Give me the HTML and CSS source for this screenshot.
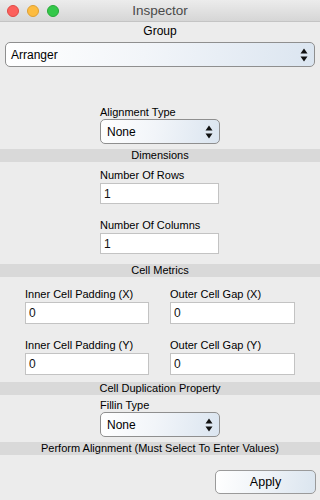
FILE: index.html
```html
<!DOCTYPE html>
<html lang="en">
<head>
    <meta charset="UTF-8">
    <meta name="viewport" content="width=device-width, initial-scale=1.0">
    <title>Inspector</title>
    <link rel="stylesheet" href="styles.css">
</head>
<body>
    <div class="titlebar">
        <div class="lights">
            <span class="light red"></span>
            <span class="light yellow"></span>
            <span class="light green"></span>
        </div>
        <div class="title">Inspector</div>
        <div></div>
    </div>

    <div class="heading group-heading">Group</div>
    <div class="popup popup-wide">
        <span>Arranger</span>
        <svg width="8" height="14" viewBox="0 0 8 14"><path d="M4 0.5 L7.5 5.5 L0.5 5.5 Z M4 13.5 L7.5 8.5 L0.5 8.5 Z" fill="#111"/></svg>
    </div>

    <div class="field align-field">
        <label class="label">Alignment Type</label>
        <div class="popup">
            <span>None</span>
            <svg width="8" height="14" viewBox="0 0 8 14"><path d="M4 0.5 L7.5 5.5 L0.5 5.5 Z M4 13.5 L7.5 8.5 L0.5 8.5 Z" fill="#111"/></svg>
        </div>
    </div>

    <div class="bar bar-dimensions">Dimensions</div>

    <div class="field rows-field">
        <label class="label">Number Of Rows</label>
        <input type="text" class="box" value="1">
    </div>
    <div class="field cols-field">
        <label class="label">Number Of Columns</label>
        <input type="text" class="box" value="1">
    </div>

    <div class="bar bar-metrics">Cell Metrics</div>

    <div class="metrics">
        <div class="cell">
            <label class="label">Inner Cell Padding (X)</label>
            <input type="text" class="box tall" value="0">
        </div>
        <div class="cell">
            <label class="label">Outer Cell Gap (X)</label>
            <input type="text" class="box tall" value="0">
        </div>
        <div class="cell second">
            <label class="label">Inner Cell Padding (Y)</label>
            <input type="text" class="box tall" value="0">
        </div>
        <div class="cell second">
            <label class="label">Outer Cell Gap (Y)</label>
            <input type="text" class="box tall" value="0">
        </div>
    </div>

    <div class="bar bar-dup">Cell Duplication Property</div>

    <div class="field fill-field">
        <label class="label">Fillin Type</label>
        <div class="popup">
            <span>None</span>
            <svg width="8" height="14" viewBox="0 0 8 14"><path d="M4 0.5 L7.5 5.5 L0.5 5.5 Z M4 13.5 L7.5 8.5 L0.5 8.5 Z" fill="#111"/></svg>
        </div>
    </div>

    <div class="bar bar-perform">Perform Alignment (Must Select To Enter Values)</div>

    <div class="actions">
        <button class="apply">Apply</button>
    </div>
</body>
</html>
```

FILE: styles.css
```css
body {
    margin: 0;
    width: 320px;
    height: 500px;
    overflow: hidden;
    background: #ececec;
    font-family: "Liberation Sans", Arial, sans-serif;
    font-size: 11px;
    color: #000;
}
.titlebar {
    display: grid;
    grid-template-columns: 1fr auto 1fr;
    align-items: center;
    height: 21px;
    border-bottom: 1px solid #c4c4c4;
    background: linear-gradient(#ececec, #d6d6d6);
}
.lights {
    display: flex;
    gap: 8px;
    padding-left: 7px;
}
.light {
    width: 12px;
    height: 12px;
    border-radius: 50%;
    box-sizing: border-box;
}
.red {
    background: #fc605c;
    border: 1px solid #df4a45;
}
.yellow {
    background: #fdbc40;
    border: 1px solid #dea033;
}
.green {
    background: #34c84a;
    border: 1px solid #28a939;
}
.title {
    font-size: 13.5px;
    color: #4a4a4a;
}
.heading {
    text-align: center;
    line-height: 14px;
    font-size: 12px;
}
.group-heading {
    margin-top: 2px;
}
.popup {
    display: flex;
    align-items: center;
    justify-content: space-between;
    box-sizing: border-box;
    height: 25px;
    padding: 0 6px 0 6px;
    border: 1px solid #8f8f8f;
    border-radius: 5px;
    background: linear-gradient(100deg, #ffffff 0%, #f2f5f9 45%, #dbe5f0 100%);
    font-size: 12px;
}
.popup svg {
    display: block;
}
.popup-wide {
    margin: 4px 5px 0;
    padding-left: 5px;
}
.field {
    width: 120px;
    margin: 0 auto;
}
.label {
    display: block;
    height: 14px;
    line-height: 14px;
}
.align-field {
    margin-top: 38px;
}
.bar {
    height: 13px;
    line-height: 13px;
    background: #d9d9d9;
    text-align: center;
}
.bar-dimensions {
    margin-top: 5px;
}
.box {
    display: block;
    box-sizing: border-box;
    width: 119px;
    height: 21px;
    margin: 1px 0 0;
    padding: 0 3px;
    border: 1px solid #c3c3c3;
    background: #fff;
    font-family: "Liberation Sans", Arial, sans-serif;
    font-size: 12px;
    color: #111;
    outline: none;
}
.rows-field {
    margin-top: 6px;
}
.cols-field {
    margin-top: 14px;
}
.bar-metrics {
    margin-top: 10px;
}
.metrics {
    display: grid;
    grid-template-columns: 124px 125px;
    column-gap: 21px;
    padding: 0 25px;
}
.cell {
    margin-top: 10px;
}
.cell.second {
    margin-top: 14px;
}
.box.tall {
    width: 100%;
    height: 22px;
}
.bar-dup {
    margin-top: 7px;
}
.fill-field {
    margin-top: 3px;
}
.bar-perform {
    margin-top: 5px;
}
.actions {
    display: flex;
    justify-content: flex-end;
    padding-right: 4px;
    margin-top: 15px;
}
.apply {
    width: 101px;
    height: 24px;
    border: 1px solid #9a9a9a;
    border-radius: 5px;
    background: linear-gradient(100deg, #ffffff 0%, #f0f4f8 45%, #dbe5ef 100%);
    font-family: "Liberation Sans", Arial, sans-serif;
    font-size: 12.5px;
    color: #000;
}
```
